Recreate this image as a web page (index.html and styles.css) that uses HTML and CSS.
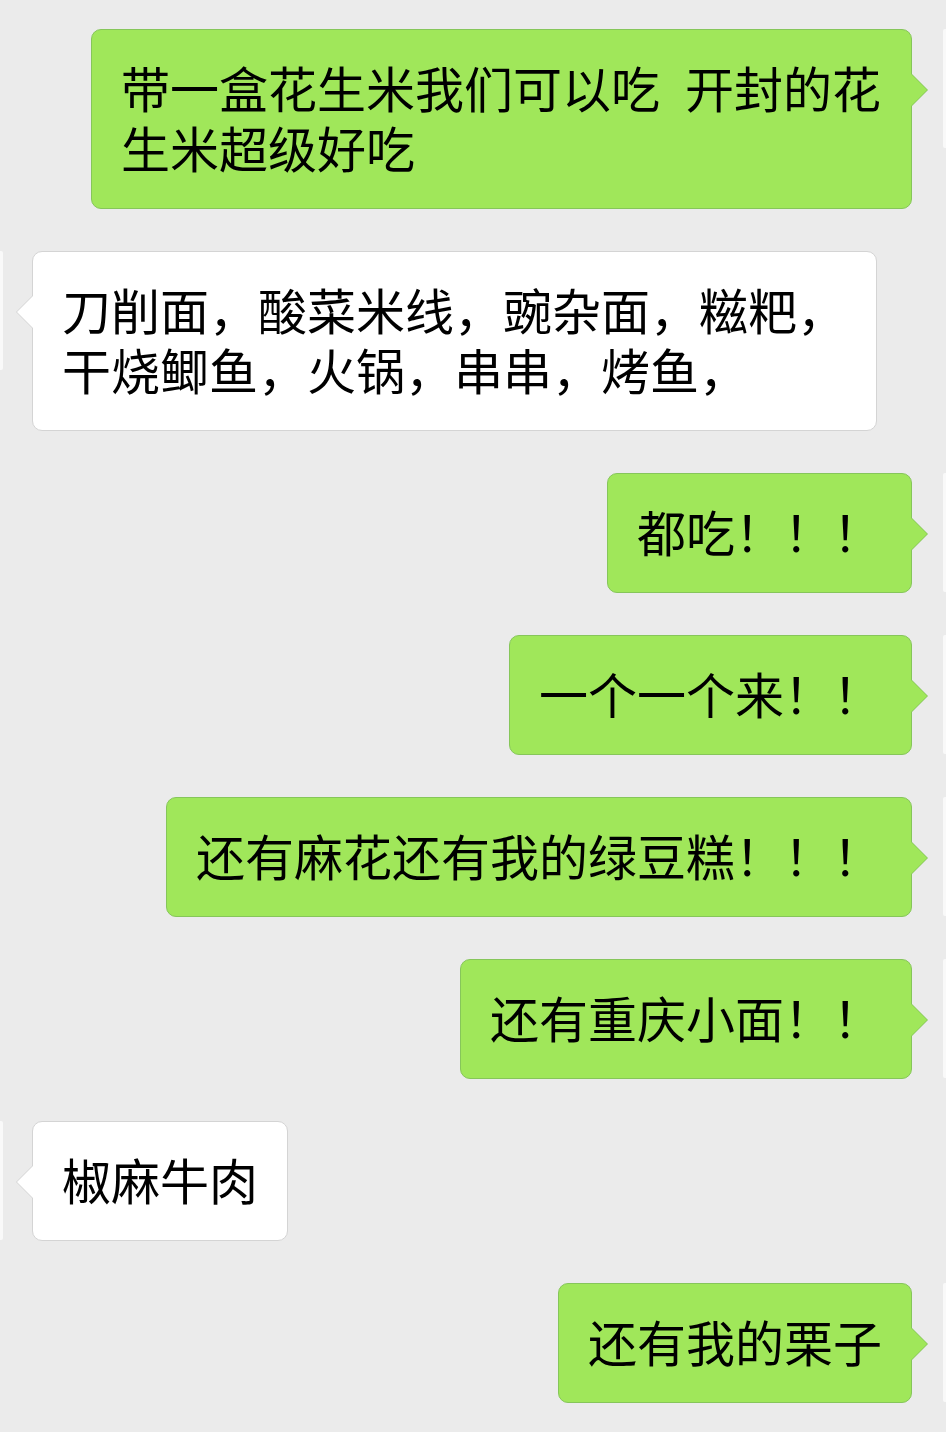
FILE: index.html
```html
<!DOCTYPE html>
<html lang="zh-CN">

<head>
    <meta charset="UTF-8">
    <meta name="viewport" content="width=device-width, initial-scale=1.0">
    <title>聊天</title>
    <link rel="stylesheet" href="styles.css">
</head>

<body>
    <div class="chat">
        <div class="row me">
            <div class="avatar"></div>
            <div class="bubble">带一盒花生米我们可以吃 开封的花生米超级好吃</div>
        </div>
        <div class="row other">
            <div class="avatar"></div>
            <div class="bubble">刀削面，酸菜米线，豌杂面，糍粑，干烧鲫鱼，火锅，串串，烤鱼，</div>
        </div>
        <div class="row me">
            <div class="avatar"></div>
            <div class="bubble">都吃！！！</div>
        </div>
        <div class="row me">
            <div class="avatar"></div>
            <div class="bubble">一个一个来！！</div>
        </div>
        <div class="row me">
            <div class="avatar"></div>
            <div class="bubble">还有麻花还有我的绿豆糕！！！</div>
        </div>
        <div class="row me">
            <div class="avatar"></div>
            <div class="bubble">还有重庆小面！！</div>
        </div>
        <div class="row other">
            <div class="avatar"></div>
            <div class="bubble">椒麻牛肉</div>
        </div>
        <div class="row me">
            <div class="avatar"></div>
            <div class="bubble">还有我的栗子</div>
        </div>
    </div>
</body>

</html>
```

FILE: styles.css
```css
body {
    margin: 0;
    padding: 0;
    background: #ebebeb;
    color: #000;
    font-family: "Noto Sans CJK SC", sans-serif;
    overflow: hidden;
}

/* avatars sit just outside the visible area */
.chat {
    display: flex;
    flex-direction: column;
    gap: 42px;
    margin: 0 -117px;
    padding: 29px 0 30px;
}

.row {
    display: flex;
    align-items: flex-start;
}

.row.me {
    flex-direction: row-reverse;
}

.avatar {
    flex-shrink: 0;
    width: 120px;
    height: 119px;
    background: #f9f9f9;
    border-radius: 2px;
}

.bubble {
    position: relative;
    box-sizing: border-box;
    padding: 27px 29px 31px;
    border: 1px solid;
    border-radius: 10px;
    font-size: 49px;
    line-height: 60px;
    word-spacing: 14px;
    text-spacing-trim: space-all;
}

.me .bubble {
    max-width: 821px;
    margin-right: 31px;
    background: #a0e75a;
    border-color: #86c65a;
}

.other .bubble {
    max-width: 845px;
    margin-left: 29px;
    background: #fff;
    border-color: #d4d4d4;
}

.bubble::before,
.bubble::after {
    content: "";
    position: absolute;
    border-style: solid;
    border-color: transparent;
}

.bubble::before {
    top: 43px;
    border-width: 17px;
}

.bubble::after {
    top: 44px;
    border-width: 16px;
}

.me .bubble::before {
    left: 100%;
    border-right-width: 0;
    border-left-color: #86c65a;
}

.me .bubble::after {
    left: 100%;
    border-right-width: 0;
    border-left-color: #a0e75a;
}

.other .bubble::before {
    right: 100%;
    border-left-width: 0;
    border-right-color: #d4d4d4;
}

.other .bubble::after {
    right: 100%;
    border-left-width: 0;
    border-right-color: #fff;
}
```
